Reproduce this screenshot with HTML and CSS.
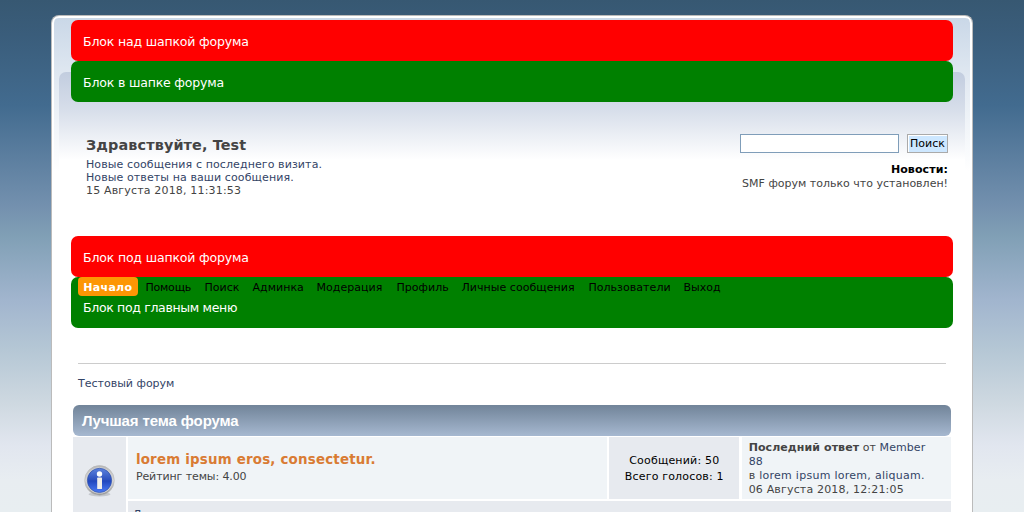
FILE: index.html
```html
<!DOCTYPE html>
<html lang="ru">
<head>
<meta charset="utf-8">
<title>Тестовый форум</title>
<link rel="stylesheet" href="styles.css">
</head>
<body>
<div class="wrapper">
  <div class="backdrop">
  <div class="content">
    <div class="block red"><span class="block-text t1">Блок над шапкой форума</span></div>
    <div class="block green"><span class="block-text t2">Блок в шапке форума</span></div>
    <header class="header">
      <div class="user">
        <div class="greeting"><span>Здравствуйте, Test</span></div>
        <a class="u1">Новые сообщения с последнего визита.</a>
        <a class="u2">Новые ответы на ваши сообщения.</a>
        <span class="u3">15 Августа 2018, 11:31:53</span>
      </div>
      <div class="news">
        <form class="search"><input class="field" type="text"><button class="submit" type="button">Поиск</button></form>
        <b class="news-title">Новости:</b>
        <span class="news-text">SMF форум только что установлен!</span>
      </div>
    </header>
    <div class="block red"><span class="block-text t3">Блок под шапкой форума</span></div>
    <div class="block green menu-block">
      <nav class="menu">
        <a class="active"><span>Начало</span></a><a class="m1">Помощь</a><a class="m2">Поиск</a><a class="m3">Админка</a><a class="m4">Модерация</a><a class="m5">Профиль</a><a class="m6">Личные сообщения</a><a class="m7">Пользователи</a><a class="m8">Выход</a>
      </nav>
      <span class="block-text t4">Блок под главным меню</span>
    </div>
    <div class="crumbs"><a>Тестовый форум</a></div>
    <section class="board">
      <h3 class="board-title"><span>Лучшая тема форума</span></h3>
      <div class="grid">
        <div class="cell dark icon">
          <svg width="32" height="34" viewBox="0 0 32 34">
            <defs>
              <linearGradient id="rim" x1="0" y1="0" x2="0" y2="1"><stop offset="0" stop-color="#b9b9b9"/><stop offset=".5" stop-color="#d8d8d8"/><stop offset="1" stop-color="#929292"/></linearGradient>
              <linearGradient id="blue" x1="0" y1="0" x2="0" y2="1"><stop offset="0" stop-color="#5c82dd"/><stop offset=".48" stop-color="#2c50be"/><stop offset=".52" stop-color="#2146bd"/><stop offset="1" stop-color="#4a7af5"/></linearGradient>
            </defs>
            <ellipse cx="15.5" cy="29.3" rx="11" ry="2.2" fill="#aeb0b5" opacity=".6"/>
            <circle cx="15.5" cy="15.4" r="14.8" fill="url(#rim)" stroke="#b5b5b5" stroke-width=".6"/>
            <circle cx="15.5" cy="15.4" r="13.2" fill="#d2d2d4"/>
            <circle cx="15.5" cy="15.4" r="12.1" fill="url(#blue)" stroke="#3151aa" stroke-width=".7"/>
            <circle cx="15.5" cy="9" r="2.7" fill="#fff"/>
            <rect x="13.2" y="12.6" width="4.8" height="11.4" rx=".6" fill="#f0eeea"/>
          </svg>
        </div>
        <div class="cell light topic"><a class="topic-title">lorem ipsum eros, consectetur.</a><span class="rating">Рейтинг темы: 4.00</span></div>
        <div class="cell dark stats"><span class="s1">Сообщений: 50</span><span class="s2">Всего голосов: 1</span></div>
        <div class="cell light last">
          <span class="l1"><b>Последний ответ</b> от <a>Member</a></span>
          <a class="l2">88</a>
          <span class="l3">в <a>lorem ipsum lorem, aliquam.</a></span>
          <span class="l4">06 Августа 2018, 12:21:05</span>
        </div>
        <div class="cell dark text"><a>Д</a></div>
      </div>
    </section>
  </div>
  </div>
</div>
</body>
</html>
```
FILE: styles.css
```css
* { box-sizing: border-box; }
html { height: 512px; overflow: hidden; }
body {
  margin: 0;
  height: 512px;
  overflow: hidden;
  padding: 15px 51px 0;
  background: linear-gradient(#375872 0, #3a5d7b 35px, #426b8f 105px, #7390ae 205px, #809fb5 235px, #a1b5ce 300px, #b5c7d5 350px, #cfd9e1 405px, #e1e6ef 445px, #e8edf1 480px, #e8eef1 512px);
  font: 11px/13px "DejaVu Sans", sans-serif;
  color: #444;
}
a { color: #334466; }
a, span { white-space: nowrap; }
.wrapper {
  width: 922px;
  height: 497px;
  overflow: hidden;
  border: 1px solid #bbb;
  border-bottom: 0;
  border-radius: 8px 8px 0 0;
  background: linear-gradient(#c9d7e7 0, #e4ebf3 70px, #fff 155px);
  box-shadow: inset 2px 0 #fff, inset -2px 0 #fff, inset 0 2px #fff;
  padding: 4px 7px 0;
}
.backdrop { padding: 0 12px; height: 492px; position: relative; }
.backdrop::before {
  content: "";
  position: absolute;
  left: 0; right: 0; top: 52px;
  height: 100px;
  border-radius: 7px 7px 0 0;
  background: linear-gradient(#c2cddf 0, #d7deea 38px, #fff 88px);
}
.content { position: relative; width: 882px; height: 492px; overflow: hidden; }
.block { height: 41px; border-radius: 7px; padding: 11px 12px; color: #fff; font-size: 12.5px; line-height: 21px; letter-spacing: -.17px; }
.red { background: #f00; }
.green { background: #008000; }
.header { display: flex; justify-content: space-between; height: 134px; padding: 32px 5px 0 15px; }
.user, .news, .last, .stats, .topic { display: flex; flex-direction: column; align-items: flex-start; }
.greeting { font-size: 14.4px; font-weight: bold; line-height: 20px; padding-top: 1px; margin-bottom: 3px; letter-spacing: .12px; }
.user > a, .user > span { line-height: 13.2px; letter-spacing: .1px; }
.user > .u3 { letter-spacing: .17px; }
.news { align-items: flex-end; }
.search { display: flex; gap: 8px; margin-bottom: 10px; }
.field { width: 159px; height: 19px; border: 1px solid #7f9db9; background: #fff; padding: 0; }
.submit { width: 41px; height: 19px; border: 1px solid #aaa; background: #cde7ff; box-shadow: inset 1px 1px #fff; padding: 0; font: 11px/15px "DejaVu Sans", sans-serif; color: #000; white-space: nowrap; }
.news-title { color: #000; line-height: 14px; letter-spacing: .1px; }
.menu-block { height: 51px; padding: 0 7px; }
.menu { display: flex; height: 20px; padding-bottom: 1px; font-size: 11px; line-height: 21px; letter-spacing: .05px; }
.menu a { color: #000; position: relative; left: -.6px; }
.menu .active { left: 0; width: 60px; height: 19px; margin-right: 8px; padding-left: 5.3px; border-radius: 4px; background: #fd9604; color: #fff; font-weight: bold; letter-spacing: .3px; }
.m1 { width: 59px; letter-spacing: -.2px; }
.m2 { width: 48px; }
.m3 { width: 64px; }
.m4 { width: 80px; }
.m5 { width: 65px; }
.m6 { width: 127px; }
.m7 { width: 95px; }
.t4 { margin-left: 5px; line-height: 22px; letter-spacing: -.33px; }
.crumbs { margin: 35px 7px 0; padding-top: 13px; height: 42px; border-top: 1px solid #ccc; line-height: 14px; }
.board { margin: 0 2px; }
.board-title { margin: 0; height: 31px; padding-left: 9px; border-radius: 6px; background: linear-gradient(#718499, #a6b8d0); color: #fff; font: bold 15px/31px "Liberation Sans", Arial, sans-serif; letter-spacing: -.12px; }
.grid { display: grid; grid-template: 61.6px 12px / 52.5px 479px 130px 209px; gap: 2.4px; margin-top: 1px; }
.light { background: #f0f4f7; }
.dark { background: #e7eaef; }
.icon { grid-row: span 2; padding: 28px 0 0 10.5px; }
.topic { padding: 14px 0 0 8px; }
.topic-title { font-size: 13.4px; font-weight: bold; line-height: 18px; color: #d97b33; letter-spacing: .2px; }
.rating { line-height: 15px; letter-spacing: -.1px; }
.stats { align-items: center; padding-top: 16px; color: #000; line-height: 16px; letter-spacing: .18px; }
.last { padding: 4px 0 0 7px; line-height: 14px; letter-spacing: .08px; }
.l3 { letter-spacing: .27px; }
.l4 { letter-spacing: .17px; }
.text { grid-column: 2 / 5; height: 12px; padding: 7px 5px 0; line-height: 14px; overflow: hidden; }
```
